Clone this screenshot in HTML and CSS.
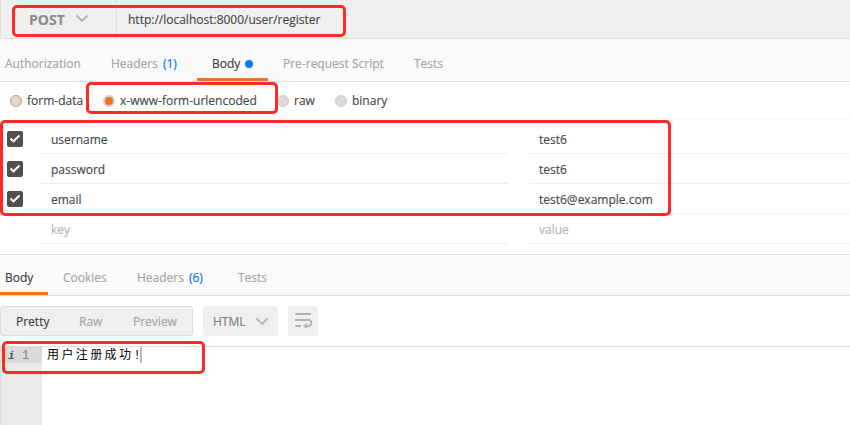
FILE: index.html
```html
<!DOCTYPE html>
<html lang="en">
<head>
<meta charset="utf-8">
<title>Request builder</title>
<link rel="stylesheet" href="styles.css">
</head>
<body>
<main class="app">
  <section class="request-bar">
    <div class="method"><span>POST</span>
      <svg class="chevron" width="14" height="9" viewBox="0 0 14 9"><path d="M1.500 1.500 7 7l5.500-5.500"/></svg>
    </div>
    <div class="url"><span class="url-text">http://localhost:8000/user/register</span></div>
  </section>
  <nav class="tabs request-tabs">
    <div class="tab">Authorization</div>
    <div class="tab">Headers <span class="count">(1)</span></div>
    <div class="tab active">Body <i class="dot"></i></div>
    <div class="tab">Pre-request Script</div>
    <div class="tab">Tests</div>
  </nav>
  <section class="modes">
    <div class="mode"><i class="radio focus"></i><span>form-data</span></div>
    <div class="mode"><i class="radio checked"></i><span class="encoded">x-www-form-urlencoded</span></div>
    <div class="mode"><i class="radio"></i><span>raw</span></div>
    <div class="mode"><i class="radio"></i><span>binary</span></div>
  </section>
  <section class="params">
    <div class="param"><div class="check"><svg width="16" height="16" viewBox="0 0 16 16"><path d="m3.500 7.500 3 2.800 6-5.800"/></svg></div><div class="cell">username</div><div class="cell">test6</div></div>
    <div class="param"><div class="check"><svg width="16" height="16" viewBox="0 0 16 16"><path d="m3.500 7.500 3 2.800 6-5.800"/></svg></div><div class="cell">password</div><div class="cell">test6</div></div>
    <div class="param"><div class="check"><svg width="16" height="16" viewBox="0 0 16 16"><path d="m3.500 7.500 3 2.800 6-5.800"/></svg></div><div class="cell">email</div><div class="cell">test6@example.com</div></div>
    <div class="param empty"><div></div><div class="cell">key</div><div class="cell">value</div></div>
  </section>
  <nav class="tabs response-tabs">
    <div class="tab active">Body</div>
    <div class="tab">Cookies</div>
    <div class="tab">Headers <span class="count">(6)</span></div>
    <div class="tab">Tests</div>
  </nav>
  <section class="toolbar">
    <div class="segmented"><span class="selected">Pretty</span><span>Raw</span><span>Preview</span></div>
    <div class="language"><span>HTML</span>
      <svg class="chevron" width="14" height="9" viewBox="0 0 14 9"><path d="M1.500 1.500 7 7l5.500-5.500"/></svg>
    </div>
    <div class="wrap">
      <svg width="18" height="17" viewBox="0 0 18 17"><path d="M1 2h16M1 8h13.500a2.500 2.500 0 0 1 0 6H12M1 14h6"/><path class="head" d="M9 14l4-3v6z"/></svg>
    </div>
  </section>
  <section class="editor">
    <div class="gutter"><div class="line-number"><i>i</i><span>1</span></div></div>
    <div class="code"><span>用户注册成功!</span><b class="caret"></b></div>
  </section>
  <div class="mark mark-url"></div>
  <div class="mark mark-mode"></div>
  <div class="mark mark-params"></div>
  <div class="mark mark-result"></div>
</main>
</body>
</html>
```
FILE: styles.css
```css
* { box-sizing: border-box; }
body { margin: 0; background: #fff; font: 12px/18px "Open Sans", "Noto Sans", sans-serif; color: #484848; -webkit-text-stroke: 0.15px currentColor; }
.app { position: relative; width: 850px; height: 425px; overflow: hidden; }
svg { display: block; fill: none; }
.chevron path { stroke: #b4b4b4; stroke-width: 1.800; }

.request-bar { display: flex; height: 39px; background: #efefef; border-bottom: 1px solid #ddd; border-left: 1px solid #ddd; }
.method { display: flex; align-items: center; gap: 10px; width: 116px; padding: 1px 0 0 28px; border-right: 1px solid #ddd; font-size: 14px; font-weight: 700; color: #8c8c8c; }
.method .chevron { margin-top: -2px; }
.url { display: flex; align-items: center; padding: 2px 0 0 11px; }

.tabs { display: grid; background: #fafafa; border-bottom: 1px solid #ddd; color: #a5a5a5; }
.tab { display: flex; align-items: center; gap: 5px; white-space: nowrap; border-bottom: 3px solid transparent; }
.tab.active { color: #404040; border-color: #f47023; }
.count { color: #0b6ff0; }
.dot { width: 8px; height: 8px; border-radius: 50%; background: #097bed; }
.request-tabs { height: 43px; padding-left: 5px; grid-template-columns: 106px 86px 71px 146px auto; }
.request-tabs .tab { padding-top: 11px; }
.request-tabs .active { padding-left: 15px; }
.request-tabs .tab:nth-child(4) { padding-left: 15px; }

.modes { display: grid; grid-template-columns: 93px 174px 58px auto; height: 37px; padding-left: 10px; }
.mode { display: flex; align-items: center; gap: 5px; }
.radio { width: 12px; height: 12px; border-radius: 50%; background: #dadada; border: 1px solid #cfcfcf; }
.radio.focus { border-color: #f58a4b; }
.radio.checked { background: #f47023; border: 2px solid #d0d0d0; }

.params { height: 135px; padding-top: 4px; border-top: 1px solid #f8f8f8; }
.param { display: grid; grid-template-columns: 33px 468px 1fr; height: 30px; padding-left: 7px; }
.check { align-self: center; width: 16px; height: 16px; border-radius: 2px; background: #505050; }
.check path { stroke: #fff; stroke-width: 2; }
.cell { border-bottom: 1px solid #eee; padding: 7px 0 0 11px; }
.cell:last-child { margin-left: 21px; padding-left: 10px; }
.empty { color: #b4b4b4; }

.response-tabs { height: 42px; border-top: 1px solid #ddd; grid-template-columns: 48px 89px 101px auto; }
.response-tabs .tab { padding-top: 8px; }
.response-tabs .tab:nth-child(1) { padding-left: 5px; }
.response-tabs .tab:nth-child(2) { padding-left: 15px; }

.toolbar { display: flex; gap: 10px; height: 50px; padding-top: 10px; }
.segmented, .language, .wrap { height: 30px; border-radius: 3px; background: #efefef; display: flex; align-items: center; }
.segmented { width: 193px; border: 1px solid #ddd; color: #a5a5a5; padding: 2px 0 0 15px; display: grid; grid-template-columns: 63px 54px auto; }
.selected { color: #404040; }
.language { width: 75px; padding: 2px 0 0 10px; gap: 9px; color: #808080; }
.language .chevron { margin-top: -2px; }
.wrap { width: 30px; justify-content: center; padding-bottom: 2px; }
.wrap path { stroke: #b4b4b4; stroke-width: 1.800; }
.wrap .head { fill: #b4b4b4; stroke: none; }

.editor { display: flex; height: 79px; border-top: 1px solid #ddd; border-left: 1px solid #ddd; font: 12px/18px "Liberation Mono", "Noto Sans CJK SC", monospace; -webkit-text-stroke: 0; }
.gutter { width: 41px; background: #ebebeb; }
.line-number { display: flex; height: 16px; padding-left: 7px; background: #dadada; color: #808080; }
.line-number i { width: 14px; font-weight: 700; color: #555; font-size: 11px; }
.code { display: flex; height: 16px; padding-left: 5px; color: #000; letter-spacing: 2.400px; }
.code span { margin-right: -3px; }
.caret { width: 2px; background: #bbb; }

.mark { position: absolute; border: 3px solid #fb2a24; border-radius: 5px; }
.mark-url { left: 12px; top: 5px; width: 334px; height: 32px; }
.mark-mode { left: 86px; top: 82px; width: 192px; height: 32px; }
.mark-params { left: 0; top: 120px; width: 671px; height: 96px; }
.mark-result { left: 2px; top: 341px; width: 203px; height: 33px; }
```
